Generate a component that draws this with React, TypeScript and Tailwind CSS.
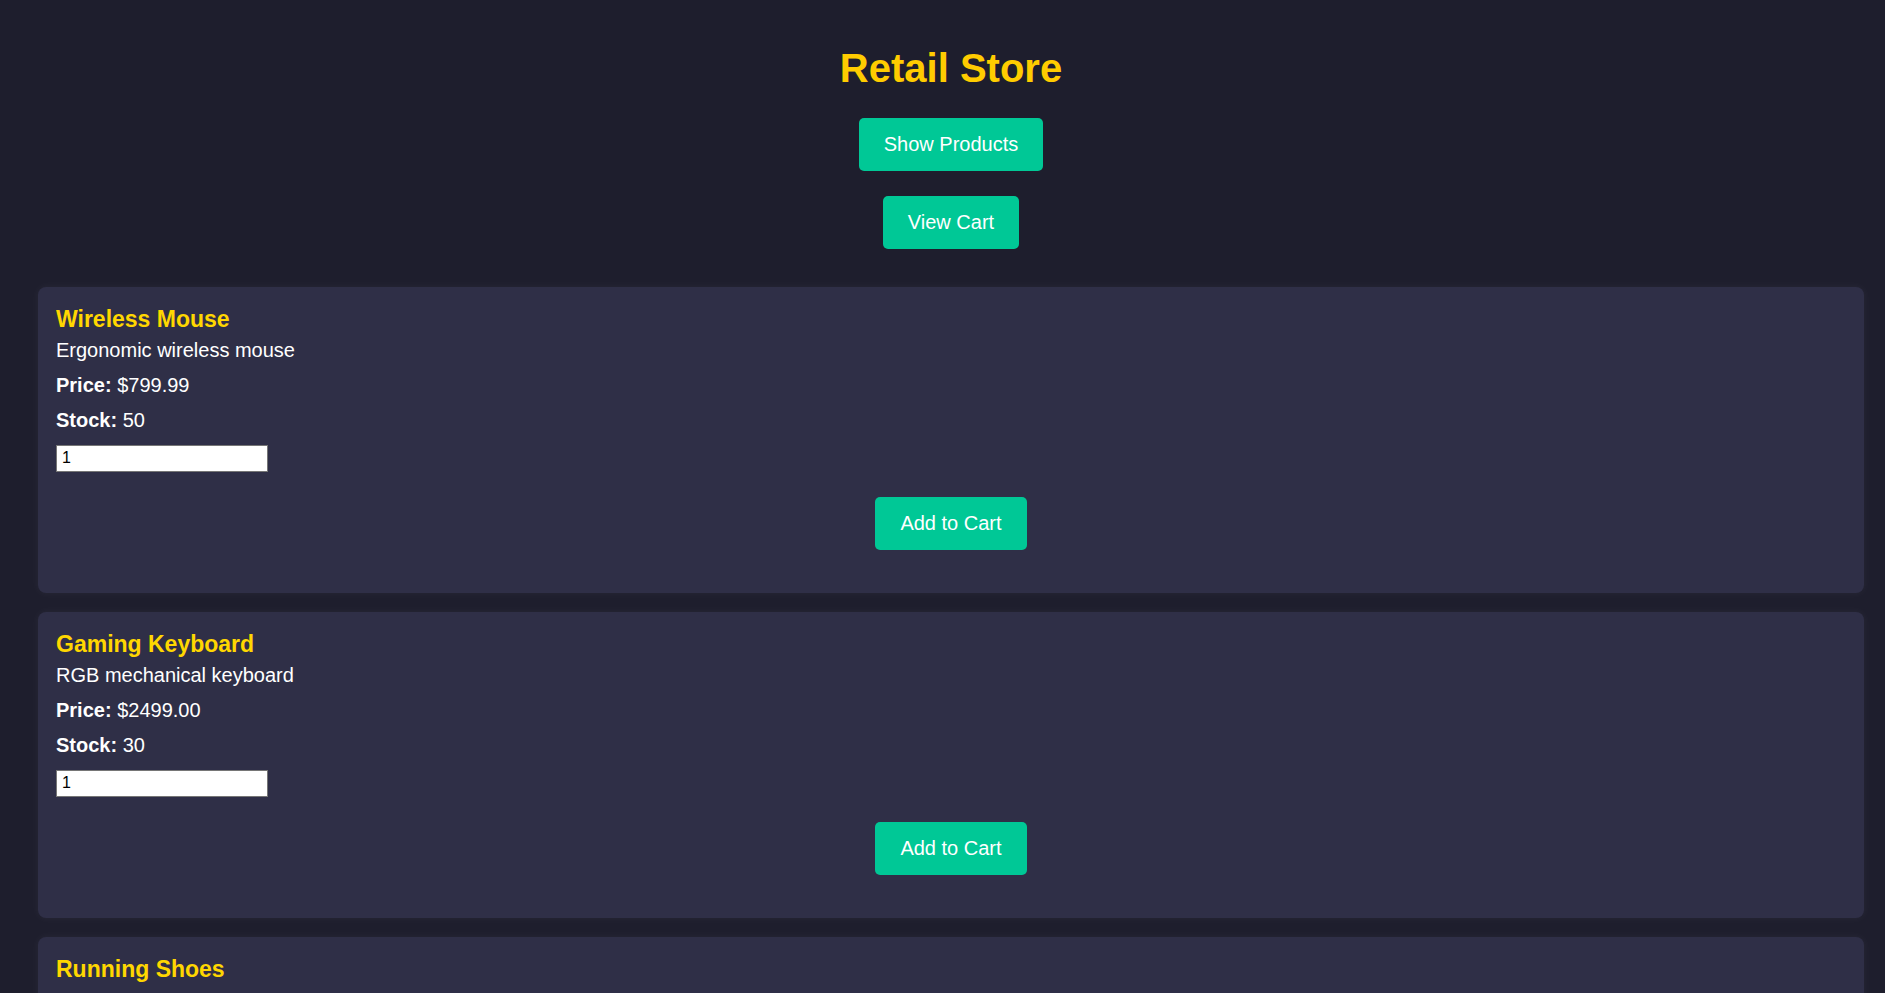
import { useState } from "react";

type Details = {
  description: string;
  price: string;
  stock: number;
};

type Product = {
  id: number;
  name: string;
  details?: Details;
};

const products: Product[] = [
  {
    id: 1,
    name: "Wireless Mouse",
    details: { description: "Ergonomic wireless mouse", price: "799.99", stock: 50 },
  },
  {
    id: 2,
    name: "Gaming Keyboard",
    details: { description: "RGB mechanical keyboard", price: "2499.00", stock: 30 },
  },
  { id: 3, name: "Running Shoes" },
];

function ActionButton({ children }: { children: string }) {
  return (
    <button
      type="button"
      className="mx-auto block cursor-pointer rounded-[5px] bg-[#00c896] px-[25px] py-3 text-xl leading-[29px] text-white"
    >
      {children}
    </button>
  );
}

function ProductDetails({ name, details }: { name: string; details: Details }) {
  const [quantity, setQuantity] = useState(1);
  return (
    <>
      <div className="mt-1 flex flex-col gap-2 text-xl leading-[27px]">
        <p>{details.description}</p>
        <p>
          <strong>Price:</strong> ${details.price}
        </p>
        <p>
          <strong>Stock:</strong> {details.stock}
        </p>
      </div>
      <input
        type="number"
        min={1}
        max={details.stock}
        value={quantity}
        aria-label={`Quantity of ${name}`}
        onChange={(event) => setQuantity(Number(event.target.value))}
        className="mt-[11px] mb-[25px] block h-[27px] w-[212px] border border-[#767676] bg-white px-[5px] pb-[2px] text-base text-black"
      />
      <ActionButton>Add to Cart</ActionButton>
    </>
  );
}

function ProductCard({ product }: { product: Product }) {
  return (
    <article className="rounded-lg bg-[#2f2f47] px-[18px] pt-[18px] pb-[43px] shadow-[0_0_10px_rgba(255,255,255,0.05)]">
      <h2 className="text-[23px] leading-7 font-bold text-[#ffd700]">{product.name}</h2>
      {product.details && <ProductDetails name={product.name} details={product.details} />}
    </article>
  );
}

export default function App() {
  return (
    <div className="h-screen overflow-hidden bg-[#1e1e2d] pt-[44px] pr-[21px] pl-[38px] font-['Liberation_Sans',Arial,sans-serif] text-white">
      <h1 className="text-center text-[40px] leading-[48px] font-bold text-[#ffcc00]">Retail Store</h1>
      <div className="mt-[26px] flex flex-col gap-[25px]">
        <ActionButton>Show Products</ActionButton>
        <ActionButton>View Cart</ActionButton>
      </div>
      <main className="mt-[38px] flex flex-col gap-[19px]">
        {products.map((product) => (
          <ProductCard key={product.id} product={product} />
        ))}
      </main>
    </div>
  );
}
